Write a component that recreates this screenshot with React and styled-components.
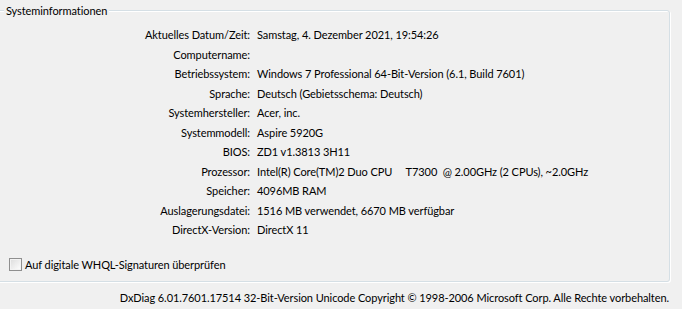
import React from 'react';
import styled, {createGlobalStyle} from 'styled-components';

const GlobalStyle = createGlobalStyle`
  html, body {
    margin: 0;
    padding: 0;
    background: #f0f0f0;
  }
  body {
    font-family: Lato, "Open Sans", "Liberation Sans", sans-serif;
    font-size: 11px;
    letter-spacing: -0.08px;
    color: #000;
  }
`

const Window = styled.div`
  width: 682px;
  height: 309px;
  overflow: hidden;
  display: flex;
  flex-direction: column;
  padding-top: 10px;
  box-sizing: border-box;
`

const Group = styled.section`
  position: relative;
  margin-left: -4px;
  width: 674px;
  height: 272px;
  box-sizing: border-box;
  border: 1px solid #d5dfe5;
  border-radius: 3px;
  box-shadow: inset 1px 1px 0 #fff, 1px 1px 0 #fff;
  display: flex;
  flex-direction: column;
`

const Legend = styled.span`
  position: absolute;
  top: -9px;
  left: 7px;
  padding: 0 2px;
  background: #f0f0f0;
  line-height: 17px;
`

const InfoGrid = styled.dl`
  margin: 14px 0 0 0;
  display: grid;
  grid-template-columns: 253px 1fr;
  column-gap: 7px;
  grid-auto-rows: 19.5px;
  align-items: center;
`

const Label = styled.dt`
  text-align: right;
  white-space: nowrap;
`

const Value = styled.dd`
  margin: 0;
  white-space: pre;
`

const CheckRow = styled.label`
  margin-top: auto;
  margin-bottom: 10px;
  margin-left: 12px;
  display: flex;
  align-items: center;
  gap: 3px;
`

const Box = styled.span`
  width: 11px;
  height: 11px;
  border: 1px solid #8f8f8f;
  background: linear-gradient(135deg, #dcdcdc 0%, #f4f4f4 70%, #fff 100%);
  box-shadow: inset 0 0 0 1px #f3f3f3;
`

const Footer = styled.div`
  flex: 1;
  display: flex;
  align-items: center;
  justify-content: flex-end;
  padding: 3px 13px 0 0;
  white-space: nowrap;
`

const rows = [
    ['Aktuelles Datum/Zeit:', 'Samstag, 4. Dezember 2021, 19:54:26'],
    ['Computername:', ''],
    ['Betriebssystem:', 'Windows 7 Professional 64-Bit-Version (6.1, Build 7601)'],
    ['Sprache:', 'Deutsch (Gebietsschema: Deutsch)'],
    ['Systemhersteller:', 'Acer, inc.'],
    ['Systemmodell:', 'Aspire 5920G'],
    ['BIOS:', 'ZD1 v1.3813 3H11'],
    ['Prozessor:', 'Intel(R) Core(TM)2 Duo CPU     T7300  @ 2.00GHz (2 CPUs), ~2.0GHz'],
    ['Speicher:', '4096MB RAM'],
    ['Auslagerungsdatei:', '1516 MB verwendet, 6670 MB verfügbar'],
    ['DirectX-Version:', 'DirectX 11'],
]

const App = () => {
    return (
        <Window>
            <GlobalStyle/>
            <Group>
                <Legend>Systeminformationen</Legend>
                <InfoGrid>
                    {rows.map(([label, value]) => (
                        <React.Fragment key={label}>
                            <Label>{label}</Label>
                            <Value>{value}</Value>
                        </React.Fragment>
                    ))}
                </InfoGrid>
                <CheckRow>
                    <Box/>
                    Auf digitale WHQL-Signaturen überprüfen
                </CheckRow>
            </Group>
            <Footer>
                DxDiag 6.01.7601.17514 32-Bit-Version Unicode Copyright © 1998-2006 Microsoft Corp. Alle Rechte vorbehalten.
            </Footer>
        </Window>
    );
};

export default App;
